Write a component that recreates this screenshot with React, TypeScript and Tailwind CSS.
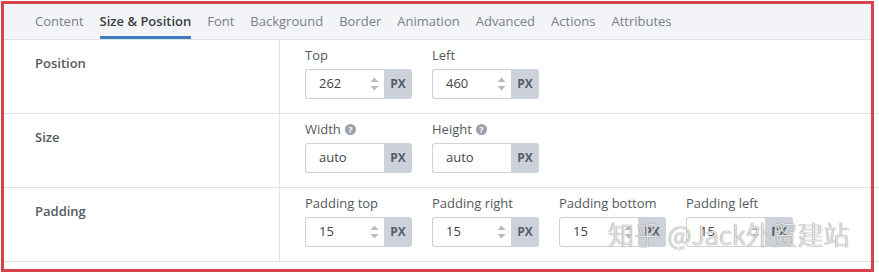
import React from "react";

const FONT = { fontFamily: '"Open Sans", "Noto Sans", sans-serif' };

const tabs = ["Content", "Size & Position", "Font", "Background", "Border", "Animation", "Advanced", "Actions", "Attributes"];

function Spinner() {
  return (
    <svg width="9" height="16" viewBox="0 0 9 16" className="shrink-0 -mt-[1px]">
      <path d="M4.5 1.5 L8.5 6 H0.5 Z" fill="#b4bbc5" />
      <path d="M4.5 14.5 L8.5 10 H0.5 Z" fill="#b4bbc5" />
    </svg>
  );
}

function HelpIcon() {
  return (
    <span className="inline-flex w-[11px] h-[11px] rounded-full bg-[#9aa1aa] text-white text-[9px] leading-[11px] font-bold items-center justify-center">
      ?
    </span>
  );
}

function Field({ label, value, spin, help }: { label: string; value: string; spin?: boolean; help?: boolean }) {
  return (
    <div className="w-[107px]">
      <div className="flex items-center gap-[4px] h-[18px] mb-[5px] text-[13px] leading-[18px] text-[#555a60] whitespace-nowrap">
        <span>{label}</span>
        {help && <HelpIcon />}
      </div>
      <div className="flex h-[30px]">
        <div className="flex-1 flex items-center border border-[#cdd2d9] border-r-0 rounded-l-[3px] bg-white pl-[13px] pr-[5px] text-[13px] text-[#444]">
          <span className="flex-1">{value}</span>
          {spin && <Spinner />}
        </div>
        <div className="w-[28px] bg-[#cdd2da] rounded-r-[3px] flex items-center justify-center text-[12px] font-bold text-[#555d6a]">
          PX
        </div>
      </div>
    </div>
  );
}

function Row({ title, children }: { title: string; children: React.ReactNode }) {
  return (
    <div className="flex border-b border-[#dfe2e6] h-[74px]">
      <div className="w-[276px] border-r border-[#dfe2e6] pl-[31px] pt-[14px] text-[13px] leading-[18px] font-semibold text-[#555a60]">
        {title}
      </div>
      <div className="flex-1 pl-[25px] pt-[6px] flex gap-[20px]">{children}</div>
    </div>
  );
}

export default function App() {
  return (
    <div className="relative w-[879px] h-[273px] bg-white overflow-hidden" style={FONT}>
      <div className="pt-[4px] pl-[4px]">
        <div className="flex h-[36px] bg-[#f2f4f7] border-b border-[#dfe2e6] pl-[31px] gap-[16px] w-[868px]">
          {tabs.map((t) => (
            <div
              key={t}
              className={
                t === "Size & Position"
                  ? "flex items-center pt-[3px] border-b-[3px] border-[#3d7cc0] text-[13px] font-semibold text-[#3a3f45]"
                  : "flex items-center pt-[3px] border-b-[3px] border-transparent text-[13px] text-[#7a8087]"
              }
            >
              {t}
            </div>
          ))}
        </div>
        <Row title="Position">
          <Field label="Top" value="262" spin />
          <Field label="Left" value="460" spin />
        </Row>
        <Row title="Size">
          <Field label="Width" value="auto" help />
          <Field label="Height" value="auto" help />
        </Row>
        <Row title="Padding">
          <Field label="Padding top" value="15" spin />
          <Field label="Padding right" value="15" spin />
          <Field label="Padding bottom" value="15" spin />
          <Field label="Padding left" value="15" spin />
        </Row>
      </div>
      <div
        className="absolute left-[608px] top-[217px] text-[26px] leading-[34px] font-light whitespace-nowrap text-[rgba(255,255,255,0.8)] [text-shadow:0_0_1px_#8a8a8a,0_0_1px_#8a8a8a]"
        style={{ fontFamily: '"Noto Sans CJK SC", "Open Sans", sans-serif' }}
      >
        知乎 <span className="ml-[2px]">@Jack外贸建站</span>
      </div>
      <div className="absolute left-[1px] top-[1px] w-[873px] h-[271px] border-[3px] border-[#d7434a] pointer-events-none" />
    </div>
  );
}
